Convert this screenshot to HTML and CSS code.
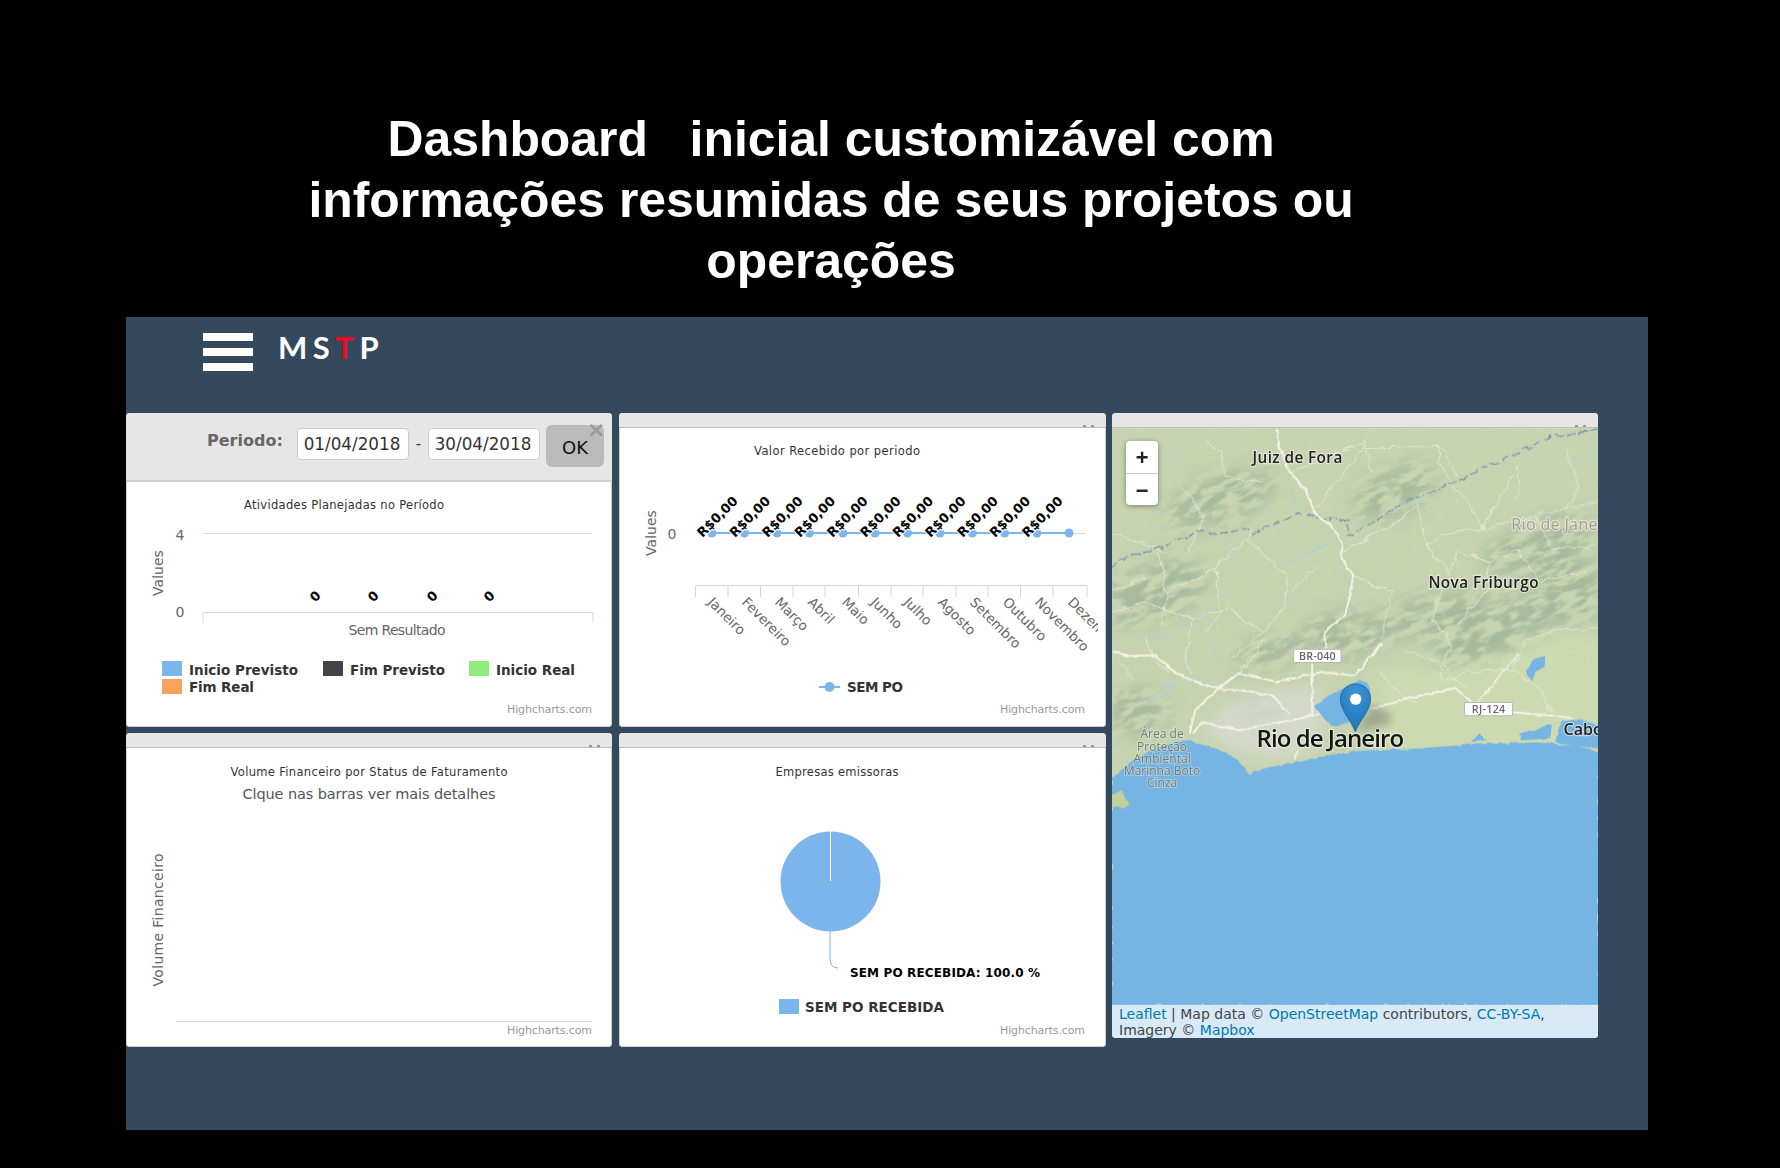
FILE: index.html
```html
<!DOCTYPE html>
<html lang="pt-BR">
<head>
<meta charset="utf-8">
<title>MSTP Dashboard</title>
<link rel="stylesheet" href="styles.css">
</head>
<body>
<h1 class="headline">Dashboard   inicial customizável com<br>informações resumidas de seus projetos ou<br>operações</h1>
<main class="app">
  <header class="topbar">
    <div class="burger"><span></span><span></span><span></span></div>
    <div class="logo">MS<span class="logo-t">T</span>P</div>
  </header>
  <section class="board">
    <article class="card">
      <div class="filter-bar">
        <span class="filter-label">Periodo:</span>
        <span class="date-box">01/04/2018</span>
        <span class="date-sep">-</span>
        <span class="date-box">30/04/2018</span>
        <button class="ok-btn">OK</button>
        <span class="filter-close">×</span>
      </div>
      <svg class="chart chart-a" viewBox="126 482 486 245">
        <text class="t-title" x="344" y="509" text-anchor="middle" textLength="200">Atividades Planejadas no Período</text>
        <line class="grid" x1="203" y1="533.5" x2="592" y2="533.5"/>
        <text class="t-axis" x="180" y="540" text-anchor="middle">4</text>
        <text class="t-axis" x="180" y="617" text-anchor="middle">0</text>
        <text class="t-axis" transform="translate(163 573) rotate(-90)" text-anchor="middle">Values</text>
        <path class="axis" d="M203 623V612.5H593V623"/>
        <text class="t-axis" x="397" y="635" text-anchor="middle" textLength="97">Sem Resultado</text>
        <text class="t-zero" transform="translate(315 596) rotate(-45)" text-anchor="middle" dy="5">0</text>
        <text class="t-zero" transform="translate(373 596) rotate(-45)" text-anchor="middle" dy="5">0</text>
        <text class="t-zero" transform="translate(432 596) rotate(-45)" text-anchor="middle" dy="5">0</text>
        <text class="t-zero" transform="translate(489 596) rotate(-45)" text-anchor="middle" dy="5">0</text>
        <rect class="s-blue" x="162" y="661" width="20" height="15"/>
        <text class="t-legend" x="189" y="675" textLength="109">Inicio Previsto</text>
        <rect class="s-dark" x="323" y="661" width="20" height="15"/>
        <text class="t-legend" x="350" y="675" textLength="95">Fim Previsto</text>
        <rect class="s-green" x="469" y="661" width="20" height="15"/>
        <text class="t-legend" x="496" y="675" textLength="79">Inicio Real</text>
        <rect class="s-orange" x="162" y="679" width="20" height="15"/>
        <text class="t-legend" x="189" y="692" textLength="65">Fim Real</text>
        <text class="t-credit" x="592" y="713" text-anchor="end" textLength="85">Highcharts.com</text>
      </svg>
    </article>

    <article class="card card-mid">
      <div class="card-head"><span class="tiny-x"></span></div>
      <svg class="chart chart-b" viewBox="619 428 487 299">
        <defs><clipPath id="xclip"><rect x="619" y="590" width="479" height="137"/></clipPath></defs>
        <text class="t-title" x="837" y="455" text-anchor="middle" textLength="166">Valor Recebido por periodo</text>
        <text class="t-axis" transform="translate(656 533) rotate(-90)" text-anchor="middle">Values</text>
        <text class="t-axis" x="672" y="539" text-anchor="middle">0</text>
        <line class="grid" x1="696" y1="533.5" x2="1086" y2="533.5"/>
        <line class="series" x1="712" y1="533" x2="1069" y2="533"/>
        <g class="dots">
          <circle cx="712" cy="533" r="4.5"/><circle cx="744.500" cy="533" r="4.5"/><circle cx="777" cy="533" r="4.5"/><circle cx="809.400" cy="533" r="4.5"/><circle cx="842.800" cy="533" r="4.5"/><circle cx="875" cy="533" r="4.5"/><circle cx="907.500" cy="533" r="4.5"/><circle cx="940" cy="533" r="4.5"/><circle cx="972.300" cy="533" r="4.5"/><circle cx="1004.600" cy="533" r="4.5"/><circle cx="1037" cy="533" r="4.5"/><circle cx="1069" cy="533" r="4.5"/>
        </g>
        <g class="t-money">
          <text transform="translate(702.500 538) rotate(-45)">R$0,00</text>
          <text transform="translate(735 538) rotate(-45)">R$0,00</text>
          <text transform="translate(767.500 538) rotate(-45)">R$0,00</text>
          <text transform="translate(800 538) rotate(-45)">R$0,00</text>
          <text transform="translate(832.500 538) rotate(-45)">R$0,00</text>
          <text transform="translate(865.500 538) rotate(-45)">R$0,00</text>
          <text transform="translate(898 538) rotate(-45)">R$0,00</text>
          <text transform="translate(930.500 538) rotate(-45)">R$0,00</text>
          <text transform="translate(962.800 538) rotate(-45)">R$0,00</text>
          <text transform="translate(995 538) rotate(-45)">R$0,00</text>
          <text transform="translate(1027.500 538) rotate(-45)">R$0,00</text>
        </g>
        <path class="axis" d="M695.500 597V585.500H1087V597M728 585.500V597M760.500 585.500V597M793 585.500V597M825 585.500V597M858.500 585.500V597M891 585.500V597M923 585.500V597M956 585.500V597M988 585.500V597M1020.500 585.500V597M1053 585.500V597"/>
        <g class="t-month" clip-path="url(#xclip)">
          <text transform="translate(707 603) rotate(45)">Janeiro</text>
          <text transform="translate(741 603) rotate(45)">Fevereiro</text>
          <text transform="translate(774 603) rotate(45)">Março</text>
          <text transform="translate(807 603) rotate(45)">Abril</text>
          <text transform="translate(841 603) rotate(45)">Maio</text>
          <text transform="translate(870 603) rotate(45)">Junho</text>
          <text transform="translate(903 603) rotate(45)">Julho</text>
          <text transform="translate(937 603) rotate(45)">Agosto</text>
          <text transform="translate(969 603) rotate(45)">Setembro</text>
          <text transform="translate(1002 603) rotate(45)">Outubro</text>
          <text transform="translate(1034 603) rotate(45)">Novembro</text>
          <text transform="translate(1067 603) rotate(45)">Dezembro</text>
        </g>
        <line class="series" x1="819" y1="687" x2="840" y2="687"/>
        <circle class="dot-solo" cx="829.500" cy="687" r="5"/>
        <text class="t-legend" x="847" y="692" textLength="56">SEM PO</text>
        <text class="t-credit" x="1085" y="713" text-anchor="end" textLength="85">Highcharts.com</text>
      </svg>
    </article>

    <article class="card card-map">
      <div class="card-head"><span class="tiny-x"></span></div>
      <div class="map">
        <svg class="map-svg" viewBox="22 68 1456 1732" preserveAspectRatio="none">
          <defs>
            <filter id="hillNoise" x="0" y="0" width="100%" height="100%">
              <feTurbulence type="fractalNoise" baseFrequency="0.016 0.04" numOctaves="5" seed="11"/>
              <feColorMatrix type="matrix" values="0 0 0 0 .38  0 0 0 0 .49  0 0 0 0 .34  5 0 0 0 -1.95"/>
            </filter>
            <filter id="softNoise" x="0" y="0" width="100%" height="100%">
              <feTurbulence type="fractalNoise" baseFrequency="0.02 0.045" numOctaves="5" seed="4"/>
              <feColorMatrix type="matrix" values="0 0 0 0 .55  0 0 0 0 .65  0 0 0 0 .46  3.4 0 0 0 -1.35"/>
            </filter>
            <filter id="wiggle" x="-5%" y="-5%" width="110%" height="110%">
              <feTurbulence type="fractalNoise" baseFrequency="0.03" numOctaves="3" seed="8" result="n"/>
              <feDisplacementMap in="SourceGraphic" in2="n" scale="26" xChannelSelector="R" yChannelSelector="G"/>
            </filter>
            <filter id="wiggleCoast" x="-5%" y="-5%" width="110%" height="110%">
              <feTurbulence type="fractalNoise" baseFrequency="0.04" numOctaves="3" seed="3" result="n"/>
              <feDisplacementMap in="SourceGraphic" in2="n" scale="12" xChannelSelector="R" yChannelSelector="G"/>
            </filter>
            <filter id="blur30"><feGaussianBlur stdDeviation="30"/></filter>
            <filter id="blur14"><feGaussianBlur stdDeviation="22"/></filter>
            <filter id="blurPin"><feGaussianBlur stdDeviation="12"/></filter>
            <filter id="blur1"><feGaussianBlur stdDeviation="1.800"/></filter>
            <mask id="range" maskUnits="userSpaceOnUse" x="22" y="68" width="1456" height="1732">
              <g class="mask-shapes" filter="url(#blur30)">
                <ellipse cx="720" cy="690" rx="120" ry="70"/>
                <ellipse cx="980" cy="630" rx="190" ry="55" transform="rotate(-12 980 630)"/>
                <ellipse cx="1160" cy="690" rx="190" ry="95" transform="rotate(-25 1160 690)"/>
                <ellipse cx="1390" cy="560" rx="110" ry="110"/>
                <ellipse cx="500" cy="740" rx="120" ry="45" transform="rotate(-20 500 740)"/>
                <ellipse cx="350" cy="280" rx="170" ry="70" transform="rotate(-20 350 280)"/>
                <ellipse cx="150" cy="560" rx="170" ry="80" transform="rotate(-20 150 560)"/>
                <ellipse cx="870" cy="260" rx="130" ry="70" transform="rotate(-25 870 260)"/>
                <ellipse cx="1300" cy="420" rx="170" ry="70" transform="rotate(-20 1300 420)"/>
                <ellipse cx="100" cy="920" rx="90" ry="70"/>
                <ellipse cx="460" cy="920" rx="60" ry="24"/>
              </g>
            </mask>
            <radialGradient id="pinFill" cx=".5" cy=".2" r=".9">
              <stop offset="0" stop-color="#3a94d6"/>
              <stop offset="1" stop-color="#1f6fb0"/>
            </radialGradient>
          </defs>
          <g filter="url(#blur1)">
            <rect class="land" x="22" y="68" width="1456" height="1732"/>
            <g transform="rotate(-24 750 600)">
              <rect x="-300" y="-300" width="2100" height="1800" filter="url(#softNoise)"/>
            </g>
            <g mask="url(#range)">
              <g transform="rotate(-24 750 600)">
                <rect x="-300" y="-300" width="2100" height="1800" filter="url(#hillNoise)"/>
              </g>
            </g>
            <path class="plain" filter="url(#blur14)" d="M820 790C960 810 1130 790 1240 720C1340 680 1420 690 1500 700V1040H800Z"/>
            <path class="urban" filter="url(#blur14)" d="M300 980C340 880 450 840 620 850C690 880 660 1000 600 1050C480 1080 370 1050 300 980Z"/>
            <g class="road-minor" filter="url(#wiggle)">
              <path d="M160 440L190 560L170 660M190 560L330 490L430 400L440 370M330 490L350 620L300 680M430 400L545 510L540 610L470 680L380 760"/>
              <path d="M300 110L345 135L360 215L470 230M560 200L780 110L800 200M620 320L780 120M770 130L1000 120L1060 210M1000 120L1000 180L1080 280L1140 380"/>
              <path d="M710 440L860 360L940 300L960 420L1040 380L1130 370L1240 180L1240 280M960 420L1030 500L1060 440L1150 470L1240 430L1300 530L1440 500"/>
              <path d="M740 510L860 560L840 640L830 700M1030 500L980 640L1040 720L1010 780L1080 850M1150 470L1140 560L1060 660"/>
              <path d="M1240 740L1270 700L1380 670L1440 680L1478 660M1240 740L1225 790L1100 800L1000 830M1220 790L1310 860L1340 930"/>
              <path d="M22 620L120 590L260 640L370 610L470 680M180 440L22 380M260 640L240 760L260 810M120 690L140 750"/>
              <path d="M900 740L1000 770L1010 820M400 810L480 700M830 800L880 870L940 890M40 760L90 830M160 770L190 800"/>
              <path d="M1140 370L1290 330L1478 290M1290 330L1340 430L1478 420M20 560L120 520M230 240L300 340L250 440M640 480L560 560M1380 130L1420 240L1380 320"/>
            </g>
            <g filter="url(#wiggle)">
              <path class="river" d="M570 300L560 240M210 835L185 870L150 885L110 905M210 850L170 850M600 450L700 400M540 480L620 440M230 690L100 700M220 670L330 610M1420 290L1450 280M1260 420L1250 445M880 300L900 290"/>
              <path class="border" d="M22 490L70 452L150 435L290 375L330 388L420 368L440 385L580 325L640 338L730 345L725 395L800 355L880 300L1050 228L1300 115L1340 95L1478 70"/>
            </g>
            <g filter="url(#wiggleCoast)">
              <path class="road-main" d="M515 68L520 120L555 200L600 250L630 325L680 360L710 410L710 460L745 510L730 590L720 630L660 680L665 730"/>
              <path class="road-main" d="M622 775V930M22 735L70 752L150 750L210 800L260 825L340 850L500 870L555 925M340 850L400 805L520 830L650 800L750 812L830 715"/>
              <path class="road-main" d="M340 850L270 920L255 985M265 985L290 950L400 975L560 945L650 925M800 910L950 870L1050 848L1110 900L1230 922L1380 935L1478 965"/>
              <path class="road-main road-thin" d="M1110 900L1240 745M575 1040L570 1060"/>
              <path class="water" d="M1290 760L1320 752L1318 785L1290 800L1280 830L1262 795Z"/>
              <path class="water" d="M630 905C660 870 710 850 765 825C800 830 800 870 790 905C770 930 740 950 700 960C670 965 655 935 630 905Z"/>
              <path class="water" d="M1100 1010L1120 985L1145 1005Z"/>
              <path class="water" d="M1240 985L1290 975L1340 955L1335 1000L1250 1005Z"/>
              <path class="water" d="M1350 1010L1365 950L1420 940L1478 962V1030L1400 1020Z"/>
              <path class="sea" d="M22 1120L90 1060L180 1020L245 1005L330 1030L400 1062L420 1090L435 1112L445 1098L560 1072L700 1045L790 1035L905 1032L1000 1025L1100 1018L1300 1012L1420 1022L1478 1042V1800H22Z"/>
              <path class="islet-fill" d="M22 1170L50 1155L60 1185L75 1198L55 1212L40 1200L22 1205Z"/>
            </g>
          </g>
          <g class="map-place">
            <text x="443" y="172" textLength="269">Juiz de Fora</text>
            <text x="970" y="548" textLength="330">Nova Friburgo</text>
            <text class="place-big" x="455" y="1025" textLength="442">Rio de Janeiro</text>
            <text class="place-region" x="1218" y="375" textLength="272">Rio de Janei</text>
            <text class="place-cabo" x="1375" y="990">Cabo</text>
          </g>
          <g class="map-park" text-anchor="middle">
            <text x="172" y="1000">Área de</text>
            <text x="172" y="1037">Proteção</text>
            <text x="172" y="1073">Ambiental</text>
            <text x="172" y="1110">Marinha Boto</text>
            <text x="172" y="1146">Cinza</text>
          </g>
          <g class="shield">
            <rect x="566" y="732" width="142" height="40" rx="4"/>
            <text x="637" y="763" text-anchor="middle" textLength="110">BR-040</text>
            <rect x="1078" y="892" width="144" height="40" rx="4"/>
            <text x="1150" y="925" text-anchor="middle" textLength="100">RJ-124</text>
          </g>
          <path class="pin-shadow" filter="url(#blurPin)" d="M752 980L800 900L860 925L850 960Z"/>
          <path class="pin" d="M751 980C735 940 706 915 706 882C706 855 727 836 752 836C777 836 797 855 797 882C797 915 767 940 751 980Z"/>
          <circle class="pin-hole" cx="752" cy="882" r="17"/>
        </svg>
        <div class="zoom-ctl">
          <span class="zoom-btn">+</span>
          <span class="zoom-btn">−</span>
        </div>
      </div>
      <p class="attribution"><a class="map-link">Leaflet</a> | Map data © <a class="map-link">OpenStreetMap</a> contributors, <a class="map-link">CC-BY-SA</a>, Imagery © <a class="map-link">Mapbox</a></p>
    </article>

    <article class="card">
      <div class="card-head"><span class="tiny-x"></span></div>
      <svg class="chart chart-b" viewBox="126 748 486 299">
        <text class="t-title" x="369" y="776" text-anchor="middle" textLength="277">Volume Financeiro por Status de Faturamento</text>
        <text class="t-sub" x="369" y="799" text-anchor="middle" textLength="253">Clque nas barras ver mais detalhes</text>
        <text class="t-axis" transform="translate(163 920) rotate(-90)" text-anchor="middle" textLength="133">Volume Financeiro</text>
        <line class="axis" x1="176" y1="1021.500" x2="592" y2="1021.500"/>
        <text class="t-credit" x="592" y="1034" text-anchor="end" textLength="85">Highcharts.com</text>
      </svg>
    </article>

    <article class="card card-mid">
      <div class="card-head"><span class="tiny-x"></span></div>
      <svg class="chart chart-b" viewBox="619 748 487 299">
        <text class="t-title" x="837" y="776" text-anchor="middle" textLength="123">Empresas emissoras</text>
        <circle class="dot-solo" cx="830.500" cy="881.500" r="50"/>
        <line class="pie-slit" x1="830.500" y1="831" x2="830.500" y2="881"/>
        <path class="pie-lead" d="M830 931V958Q830 968 838 968"/>
        <text class="t-pie" x="850" y="977" textLength="190">SEM PO RECEBIDA: 100.0 %</text>
        <rect class="s-blue" x="779" y="999" width="20" height="15"/>
        <text class="t-legend" x="805" y="1012" textLength="139">SEM PO RECEBIDA</text>
        <text class="t-credit" x="1085" y="1034" text-anchor="end" textLength="85">Highcharts.com</text>
      </svg>
    </article>
  </section>
</main>
</body>
</html>
```
FILE: styles.css
```css
* { box-sizing: border-box; }
html, body { margin: 0; height: 1168px; background: #000; overflow: hidden; }
body { font-family: "DejaVu Sans", sans-serif; }

.headline {
  margin: 0;
  width: 1662px;
  height: 317px;
  padding-top: 109px;
  font-family: "Liberation Sans", Arial, sans-serif;
  font-size: 49.900px;
  line-height: 61px;
  font-weight: 700;
  color: #fff;
  text-align: center;
  white-space: pre;
}

.app {
  margin-left: 126px;
  width: 1522px;
  height: 813px;
  background: #34495e;
}

.topbar {
  height: 96px;
  display: flex;
  align-items: flex-start;
  padding: 16px 0 0 77px;
  gap: 25px;
}
.burger { width: 50px; display: flex; flex-direction: column; gap: 7px; }
.burger span { display: block; height: 8px; background: #fff; }
.logo {
  font-family: Lato, "Open Sans", sans-serif;
  font-size: 31px;
  font-weight: 700;
  line-height: 32px;
  letter-spacing: 5.500px;
  color: #fff;
  margin-top: -2px;
}
.logo-t { color: #ea0a20; }

.board {
  display: grid;
  grid-template-columns: 486px 488px 486px;
  grid-template-rows: 314px 314px;
  column-gap: 6px;
  row-gap: 6px;
  align-items: start;
}
.card {
  position: relative;
  height: 314px;
  display: flex;
  flex-direction: column;
  background: #fff;
  border-radius: 4px;
  overflow: hidden;
  box-shadow: inset 0 0 0 1px #c9ced3;
}
.card-mid { margin-left: 1px; }
.card-map { grid-column: 3; grid-row: 1 / span 2; height: 625px; }

.card-head {
  position: relative;
  height: 15px;
  flex: none;
  background: #e6e6e6;
  border-bottom: 1px solid #bdbdbd;
}
.tiny-x {
  position: absolute;
  right: 12px;
  bottom: 0;
  width: 11px;
  height: 2px;
  background: linear-gradient(90deg, #999 0 3px, transparent 3px 8px, #999 8px);
}

.filter-bar {
  position: relative;
  height: 69px;
  flex: none;
  display: flex;
  align-items: flex-start;
  padding: 15px 0 0 81px;
  background: #e6e6e6;
  border-bottom: 2px solid #d0d0d0;
}
.filter-label {
  font-size: 16px;
  font-weight: 700;
  color: #666;
  line-height: 20px;
  margin-top: 3px;
  width: 90px;
}
.date-box {
  width: 112px;
  height: 32px;
  padding-right: 2px;
  background: #fff;
  border: 1px solid #ccc;
  border-radius: 4px;
  font-size: 16.800px;
  line-height: 31px;
  text-align: center;
  color: #333;
}
.date-sep { width: 19px; text-align: center; font-size: 16px; line-height: 32px; color: #444; }
.ok-btn {
  width: 58px;
  height: 42px;
  margin: -3px 0 0 6px;
  padding: 3px 0 0;
  border: 0;
  border-radius: 6px;
  background: #bbb;
  color: #111;
  font-family: "DejaVu Sans", sans-serif;
  font-size: 18px;
}
.filter-close {
  position: absolute;
  left: 461px;
  top: 6px;
  font-size: 22px;
  font-weight: 700;
  line-height: 22px;
  color: #999;
}

.chart { display: block; width: 100%; flex: 1; min-height: 0; }
.chart text { font-family: "DejaVu Sans", sans-serif; }
.t-title { font-size: 11.500px; fill: #333; }
.t-sub { font-size: 14.500px; fill: #555; }
.t-axis { font-size: 14px; fill: #666; }
.t-legend { font-size: 13.500px; font-weight: 700; fill: #333; }
.t-credit { font-size: 11px; fill: #999; }
.t-zero { font-size: 13px; font-weight: 700; fill: #000; stroke: #fff; stroke-width: 2px; paint-order: stroke; }
.t-money text { font-size: 13px; font-weight: 700; fill: #000; stroke: #fff; stroke-width: 2px; paint-order: stroke; }
.t-month text { font-size: 13.500px; fill: #666; }
.t-pie { font-size: 12px; font-weight: 700; fill: #000; }
.grid { stroke: #dcdcdc; stroke-width: 1; }
.axis { fill: none; stroke: #ccd6eb; stroke-width: 1; }
.series { stroke: #7cb5ec; stroke-width: 2; }
.dots circle, .dot-solo { fill: #7cb5ec; }
.pie-slit { stroke: #fff; stroke-width: 1; }
.pie-lead { fill: none; stroke: #7cb5ec; stroke-width: 1; }
.s-blue { fill: #7cb5ec; }
.s-dark { fill: #434348; }
.s-green { fill: #90ed7d; }
.s-orange { fill: #f7a35c; }

.map { position: relative; height: 577px; flex: none; overflow: hidden; }
.map-svg { display: block; width: 100%; height: 100%; }
.land { fill: #c8d4ae; }
.mask-shapes { fill: #fff; }
.plain { fill: #cfdcb2; opacity: .85; }
.urban { fill: #dededa; opacity: .6; }
.road-minor path { fill: none; stroke: #eff0e4; stroke-width: 3; opacity: .7; }
.river { fill: none; stroke: #a9cfe0; stroke-width: 3; }
.border { fill: none; stroke: #7f9bb0; stroke-width: 4; stroke-dasharray: 26 9; }
.road-main { fill: none; stroke: #f4f2e8; stroke-width: 6; stroke-linejoin: round; }
.road-thin { stroke-width: 4; }
.water, .sea { fill: #75b4e3; }
.islet-fill { fill: #c5cf98; }
.map-place text {
  font-family: "Open Sans", sans-serif;
  font-size: 46px;
  font-weight: 600;
  fill: #222;
  stroke: #f4f4ea;
  stroke-width: 7px;
  stroke-opacity: .6;
  paint-order: stroke;
}
.map-place .place-big { font-size: 72px; fill: #151515; }
.map-place .place-region { font-size: 48px; font-weight: 400; fill: #a89c98; }
.map-place .place-cabo { font-size: 48px; }
.map-park text {
  font-family: "Open Sans", sans-serif;
  font-size: 36px;
  fill: #6f7a76;
  stroke: #eef0e4;
  stroke-width: 5px;
  stroke-opacity: .5;
  paint-order: stroke;
}
.shield rect { fill: #fff; stroke: #b8b8b0; stroke-width: 3; }
.shield text { font-family: "Open Sans", sans-serif; font-size: 32px; font-weight: 600; fill: #666; }
.pin-shadow { fill: #555; opacity: .35; }
.pin { fill: url(#pinFill); stroke: #1b5f97; stroke-width: 2; }
.pin-hole { fill: #fff; }

.zoom-ctl {
  position: absolute;
  left: 14px;
  top: 13px;
  width: 32px;
  height: 64px;
  background: #fff;
  border-radius: 4px;
  box-shadow: 0 1px 5px rgba(0, 0, 0, .4);
  display: flex;
  flex-direction: column;
}
.zoom-btn {
  height: 32px;
  padding-top: 4px;
  font-family: "Liberation Mono", monospace;
  font-size: 22px;
  font-weight: 700;
  line-height: 30px;
  text-align: center;
  color: #222;
}
.zoom-btn + .zoom-btn { border-top: 1px solid #ccc; }

.attribution {
  margin: 0;
  height: 33px;
  padding: 1px 7px 0;
  background: #d8eaf8;
  font-family: "DejaVu Sans", Verdana, sans-serif;
  font-size: 14px;
  line-height: 16px;
  color: #444;
}
.map-link { color: #0078a8; }
```
